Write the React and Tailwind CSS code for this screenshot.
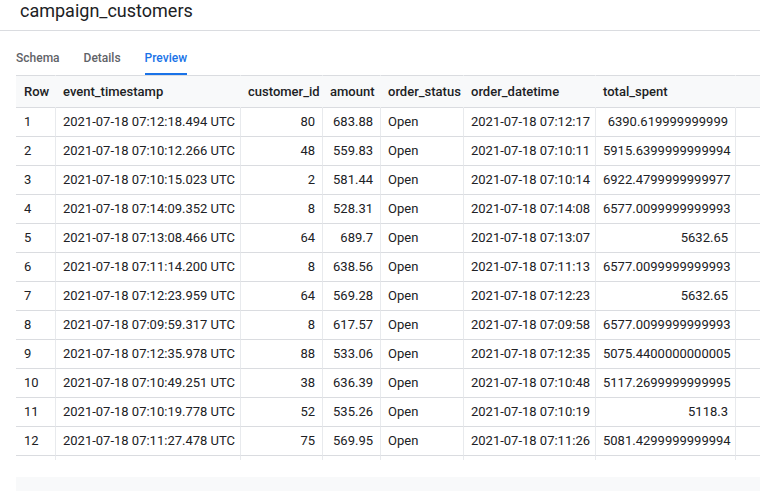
const columns = [
    { key: "row", label: "Row", width: "w-[39px]" },
    { key: "event_timestamp", label: "event_timestamp", width: "w-[185px]" },
    { key: "customer_id", label: "customer_id", width: "w-[82px]", right: true },
    { key: "amount", label: "amount", width: "w-[58px]", right: true },
    { key: "order_status", label: "order_status", width: "w-[83px]" },
    { key: "order_datetime", label: "order_datetime", width: "w-[132px]" },
    { key: "total_spent", label: "total_spent", width: "w-[140px]", right: true },
];

const rows = [
    ["2021-07-18 07:12:18.494 UTC", "80", "683.88", "Open", "2021-07-18 07:12:17", "6390.619999999999"],
    ["2021-07-18 07:10:12.266 UTC", "48", "559.83", "Open", "2021-07-18 07:10:11", "5915.6399999999994"],
    ["2021-07-18 07:10:15.023 UTC", "2", "581.44", "Open", "2021-07-18 07:10:14", "6922.4799999999977"],
    ["2021-07-18 07:14:09.352 UTC", "8", "528.31", "Open", "2021-07-18 07:14:08", "6577.0099999999993"],
    ["2021-07-18 07:13:08.466 UTC", "64", "689.7", "Open", "2021-07-18 07:13:07", "5632.65"],
    ["2021-07-18 07:11:14.200 UTC", "8", "638.56", "Open", "2021-07-18 07:11:13", "6577.0099999999993"],
    ["2021-07-18 07:12:23.959 UTC", "64", "569.28", "Open", "2021-07-18 07:12:23", "5632.65"],
    ["2021-07-18 07:09:59.317 UTC", "8", "617.57", "Open", "2021-07-18 07:09:58", "6577.0099999999993"],
    ["2021-07-18 07:12:35.978 UTC", "88", "533.06", "Open", "2021-07-18 07:12:35", "5075.4400000000005"],
    ["2021-07-18 07:10:49.251 UTC", "38", "636.39", "Open", "2021-07-18 07:10:48", "5117.2699999999995"],
    ["2021-07-18 07:10:19.778 UTC", "52", "535.26", "Open", "2021-07-18 07:10:19", "5118.3"],
    ["2021-07-18 07:11:27.478 UTC", "75", "569.95", "Open", "2021-07-18 07:11:26", "5081.4299999999994"],
];

export default function App() {
    const tabs = ["Schema", "Details", "Preview"];

    return (
        <div className="bg-white text-[#202124] font-['Roboto','Liberation_Sans',sans-serif] h-[491px] overflow-hidden">
            {/* title bar */}
            <div className="h-[31px] border-b border-[#dadce0] px-5">
                <h1 className="text-[18px] leading-[22px] font-normal">campaign_customers</h1>
            </div>

            {/* tabs */}
            <div className="flex gap-6 pl-4">
                {tabs.map((t) => (
                    <div
                        key={t}
                        className={
                            t === "Preview"
                                ? "pt-[17px] pb-[5px] text-[12px] leading-[20px] font-medium text-[#1a73e8] border-b-2 border-[#1a73e8]"
                                : "pt-[17px] pb-[5px] text-[12px] leading-[20px] font-medium text-[#5f6368] border-b-2 border-transparent"
                        }
                    >
                        {t}
                    </div>
                ))}
            </div>

            {/* preview table */}
            <div className="ml-4 h-[385px] overflow-hidden">
                <table className="w-[744px] table-fixed border-separate border-spacing-0 text-[13px] leading-[20px]">
                    <colgroup>
                        {columns.map((c) => (
                            <col key={c.key} className={c.width} />
                        ))}
                        <col />
                    </colgroup>
                    <thead>
                        <tr className="bg-[#f8f9fa]">
                            {columns.map((c, i) => (
                                <th
                                    key={c.key}
                                    className={
                                        (i === 0 ? "pl-2 " : "pl-[7px] border-l border-l-[#f8f9fa] ") +
                                        "pt-[6px] pb-[5px] text-left font-medium whitespace-nowrap border-t border-b border-t-[#dadce0] border-b-[#dadce0]"
                                    }
                                >
                                    {c.label}
                                </th>
                            ))}
                            <th className="border-t border-b border-l border-t-[#dadce0] border-b-[#dadce0] border-l-[#f8f9fa]"></th>
                        </tr>
                    </thead>
                    <tbody>
                        {rows.map((r, idx) => {
                            const cells = [String(idx + 1), ...r];
                            return (
                                <tr key={idx}>
                                    {cells.map((v, i) => (
                                        <td
                                            key={i}
                                            className={
                                                (i === 0 ? "pl-2 " : "pl-[7px] border-l border-l-[#e8eaed] ") +
                                                (columns[i].right ? "text-right pr-[7px] " : "text-left ") +
                                                "py-1 whitespace-nowrap border-b border-b-[#dadce0]"
                                            }
                                        >
                                            {v}
                                        </td>
                                    ))}
                                    <td className="border-l border-l-[#e8eaed] border-b border-b-[#dadce0]"></td>
                                </tr>
                            );
                        })}
                        <tr>
                            {columns.map((c, i) => (
                                <td
                                    key={c.key}
                                    className={(i === 0 ? "" : "border-l border-l-[#e8eaed] ") + "py-1"}
                                >
                                    &nbsp;
                                </td>
                            ))}
                            <td className="border-l border-l-[#e8eaed]"></td>
                        </tr>
                    </tbody>
                </table>
            </div>

            {/* bottom bar */}
            <div className="ml-4 mt-[17px] h-[40px] bg-[#f8f9fa]"></div>
        </div>
    );
}
